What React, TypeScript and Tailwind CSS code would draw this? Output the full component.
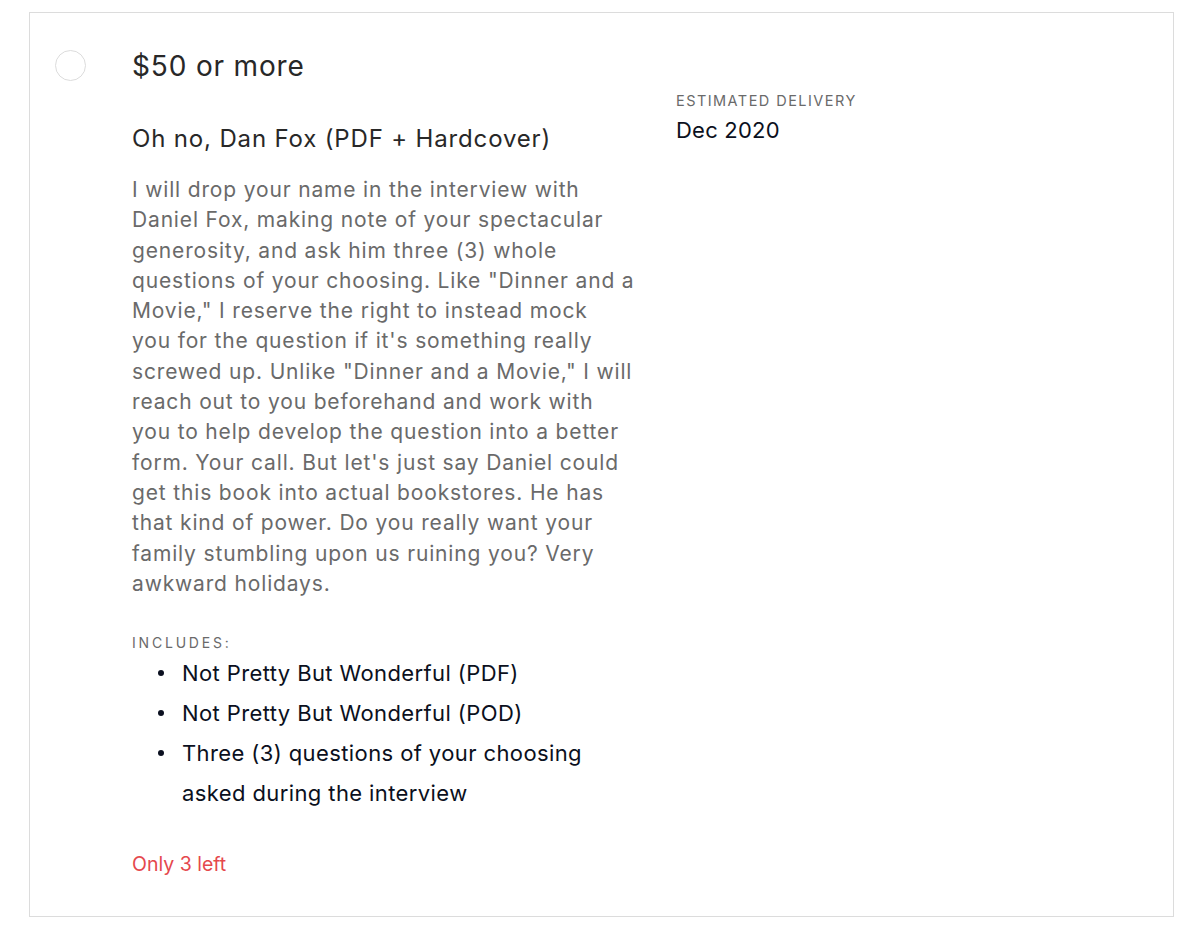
const items = [
  "Not Pretty But Wonderful (PDF)",
  "Not Pretty But Wonderful (POD)",
  "Three (3) questions of your choosing asked during the interview",
];

export default function App() {
  return (
    <div className="min-h-screen bg-white pl-[29px] pr-[26px] pt-[12px] font-['Inter',sans-serif]">
      <div className="border border-[#dcdcdc] h-[905px] flex pt-[35px] pl-[25px]">
        <div className="w-[31px] h-[31px] rounded-full border border-[#dcdcdc] mt-[2px] shrink-0" />
        <div className="ml-[46px] w-[506px] shrink-0">
          <div className="text-[28px] leading-[36px] tracking-[0.03em] text-[#282828]">$50 or more</div>
          <div className="mt-[38px] text-[24px] leading-[34px] tracking-[0.035em] text-[#282828]">
            Oh no, Dan Fox (PDF + Hardcover)
          </div>
          <p className="mt-[19px] text-[21px] leading-[30.3px] tracking-[0.04em] text-[#6a6a6a]">
            I will drop your name in the interview with Daniel Fox, making note of your
            spectacular generosity, and ask him three (3) whole questions of your choosing.
            Like "Dinner and a Movie," I reserve the right to instead mock you&nbsp;for the
            question if it's something really screwed up. Unlike "Dinner and a Movie," I will
            reach out to you beforehand and work with you to help develop the question into a
            better form. Your call. But let's just say Daniel could get this book into actual
            bookstores. He has that kind of power. Do you really want your family stumbling
            upon us ruining you? Very awkward holidays.
          </p>
          <div className="mt-[34px] text-[14px] leading-[20px] tracking-[0.2em] text-[#6a6a6a]">
            INCLUDES:
          </div>
          <ul className="text-[22px] leading-[40px] tracking-[0.018em] text-[#0b1020]">
            {items.map((t) => (
              <li key={t} className="flex">
                <span className="w-[50px] h-[40px] pl-[26px] flex items-center shrink-0">
                  <span className="w-[6px] h-[6px] rounded-full bg-[#0b1020]" />
                </span>
                <span className="w-[410px]">{t}</span>
              </li>
            ))}
          </ul>
          <div className="mt-[36px] text-[19.5px] leading-[30px] text-[#e5484d]">Only 3 left</div>
        </div>
        <div className="ml-[38px] mt-[43px]">
          <div className="text-[14.5px] leading-[20px] tracking-[0.1em] text-[#6a6a6a]">
            ESTIMATED DELIVERY
          </div>
          <div className="mt-[4px] text-[22px] leading-[30px] tracking-[0.01em] text-[#0b1020]">Dec 2020</div>
        </div>
      </div>
    </div>
  );
}
